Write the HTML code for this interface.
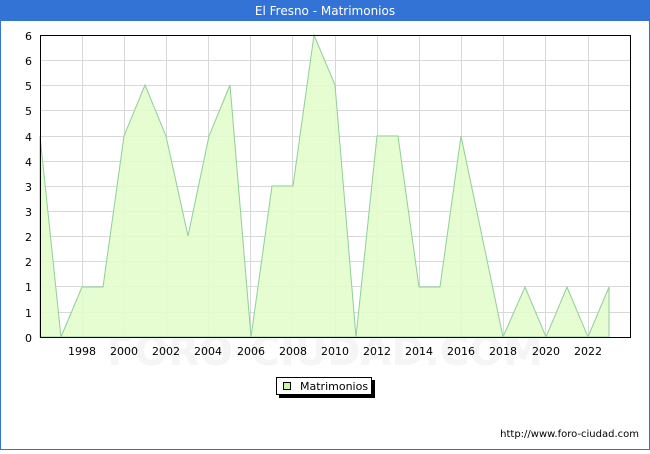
<!DOCTYPE html>
<html><head><style>
body{margin:0;width:650px;height:450px;overflow:hidden;background:#fff;font-family:"DejaVu Sans","Liberation Sans",sans-serif}
</style></head><body>
<svg width="650" height="450" xmlns="http://www.w3.org/2000/svg" font-family="DejaVu Sans, Liberation Sans, sans-serif">
<rect x="0.5" y="0.5" width="649" height="449" fill="#fff" stroke="#3373d6"/>
<rect x="0" y="0" width="650" height="21" fill="#3373d6"/>
<text x="325" y="15" fill="#fff" font-size="12" text-anchor="middle">El Fresno - Matrimonios</text>
<text x="325" y="365" fill="#f5f5f5" font-size="40" text-anchor="middle" font-weight="bold">FORO-CIUDAD.COM</text>
<g stroke="#d8d8d8" stroke-width="1">
<line x1="40" x2="630" y1="60.5" y2="60.5"/><line x1="40" x2="630" y1="85.5" y2="85.5"/><line x1="40" x2="630" y1="110.5" y2="110.5"/><line x1="40" x2="630" y1="136.5" y2="136.5"/><line x1="40" x2="630" y1="161.5" y2="161.5"/><line x1="40" x2="630" y1="186.5" y2="186.5"/><line x1="40" x2="630" y1="211.5" y2="211.5"/><line x1="40" x2="630" y1="236.5" y2="236.5"/><line x1="40" x2="630" y1="261.5" y2="261.5"/><line x1="40" x2="630" y1="286.5" y2="286.5"/><line x1="40" x2="630" y1="312.5" y2="312.5"/>
<line y1="35" y2="337" x1="82.5" x2="82.5"/><line y1="35" y2="337" x1="124.5" x2="124.5"/><line y1="35" y2="337" x1="166.5" x2="166.5"/><line y1="35" y2="337" x1="208.5" x2="208.5"/><line y1="35" y2="337" x1="250.5" x2="250.5"/><line y1="35" y2="337" x1="292.5" x2="292.5"/><line y1="35" y2="337" x1="335.5" x2="335.5"/><line y1="35" y2="337" x1="377.5" x2="377.5"/><line y1="35" y2="337" x1="419.5" x2="419.5"/><line y1="35" y2="337" x1="461.5" x2="461.5"/><line y1="35" y2="337" x1="503.5" x2="503.5"/><line y1="35" y2="337" x1="545.5" x2="545.5"/><line y1="35" y2="337" x1="588.5" x2="588.5"/>
</g>
<polygon fill="#e2fdcb" fill-opacity="0.9" stroke="#8fcf99" stroke-width="1" points="40,337 40,136 61,337 82,287 103,287 124,136 145,85 166,136 188,236 209,136 230,85 251,337 272,186 293,186 314,35 335,85 356,337 377,136 398,136 419,287 440,287 461,136 482,236 503,337 525,287 546,337 567,287 588,337 609,287 609,337"/>
<rect x="40.5" y="35.5" width="590" height="302" fill="none" stroke="#000"/>
<g font-size="11" fill="#000" text-anchor="end">
<text x="32" y="40">6</text><text x="32" y="65">6</text><text x="32" y="90">5</text><text x="32" y="115">5</text><text x="32" y="141">4</text><text x="32" y="166">4</text><text x="32" y="191">3</text><text x="32" y="216">3</text><text x="32" y="241">2</text><text x="32" y="266">2</text><text x="32" y="291">1</text><text x="32" y="317">1</text><text x="32" y="342">0</text>
</g>
<g font-size="11" fill="#000" text-anchor="middle">
<text x="82" y="355">1998</text><text x="124" y="355">2000</text><text x="166" y="355">2002</text><text x="208" y="355">2004</text><text x="251" y="355">2006</text><text x="293" y="355">2008</text><text x="335" y="355">2010</text><text x="377" y="355">2012</text><text x="419" y="355">2014</text><text x="461" y="355">2016</text><text x="503" y="355">2018</text><text x="546" y="355">2020</text><text x="588" y="355">2022</text>
</g>
<rect x="279" y="380" width="96" height="18" fill="#000"/>
<rect x="276.5" y="377.5" width="95" height="17" fill="#fff" stroke="#000"/>
<rect x="283.5" y="382.5" width="7" height="7" fill="#cdf5a8" stroke="#000"/>
<text x="300" y="390" font-size="11">Matrimonios</text>
<text x="639" y="437" font-size="10" text-anchor="end">http://www.foro-ciudad.com</text>
</svg>
</body></html>
